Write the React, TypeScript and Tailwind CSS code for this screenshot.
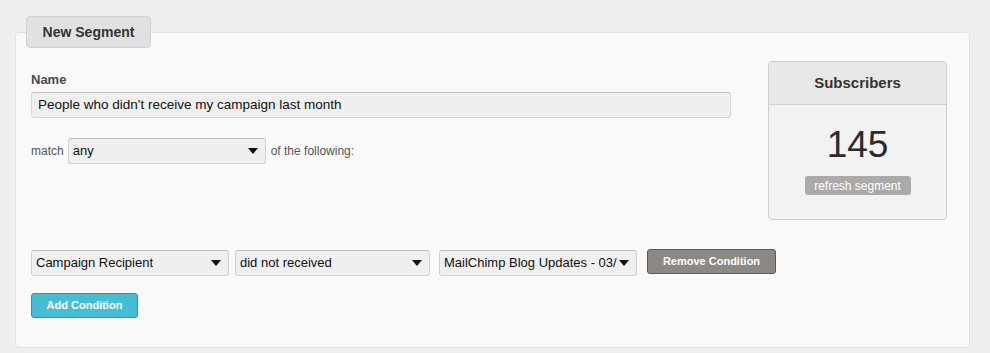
import React from 'react'

function Caret() {
  return (
    <svg width="10" height="6" viewBox="0 0 10 6" className="shrink-0">
      <path d="M0 0 L10 0 L5 6 Z" fill="#111" />
    </svg>
  )
}

function FakeSelect({ value, width }: { value: string; width: string }) {
  return (
    <div
      className={`${width} h-[26px] flex items-center justify-between gap-[2px] pl-[4px] pr-[7px] bg-[#efefef] border border-[#d2d2d2] border-t-[#bdbdbd] rounded-[3px] text-[13px] text-[#111] whitespace-nowrap`}
    >
      <span className="overflow-hidden">{value}</span>
      <Caret />
    </div>
  )
}

export default function App() {
  return (
    <div
      className="min-h-[353px] w-[990px] bg-[#efefef] pt-[16px] pl-[15px]"
      style={{ fontFamily: '"Liberation Sans", Arial, sans-serif' }}
    >
      <div className="relative z-10 ml-[11px] mb-[-16px] w-[125px] h-[32px] flex items-center justify-center bg-[#e1e1e1] border border-[#cfcfcf] rounded-[4px] text-[14px] font-bold text-[#333]">
        New Segment
      </div>

      <div className="w-[955px] h-[316px] bg-[#f9f9f9] border border-[#e2e2e2] rounded-[4px] pt-[28px] pl-[15px] pr-[22px]">
        <div className="flex justify-between">
          <div className="w-[700px] pt-[11px]">
            <div className="text-[13px] leading-[15px] font-bold text-[#4a4a4a]">Name</div>
            <div className="mt-[5px] h-[26px] flex items-center px-[6px] bg-[#efefef] border border-[#d6d6d6] border-t-[#c2c2c2] rounded-[3px] text-[13.5px] text-[#111]">
              People who didn't receive my campaign last month
            </div>
            <div className="mt-[20px] flex items-center gap-[4px] text-[12px] text-[#555]">
              <span>match</span>
              <FakeSelect value="any" width="w-[198px]" />
              <span className="ml-[1px]">of the following:</span>
            </div>
          </div>

          <div className="w-[179px] h-[159px] flex flex-col bg-[#f2f2f2] border border-[#cfcfcf] rounded-[4px] overflow-hidden">
            <div className="h-[43px] shrink-0 flex items-center justify-center bg-[#e7e7e7] border-b border-[#cfcfcf] text-[15px] font-bold text-[#333]">
              Subscribers
            </div>
            <div className="flex flex-col items-center pt-[20px]">
              <div className="text-[37px] leading-[40px] text-[#2b2b2b]">145</div>
              <div className="mt-[11px] w-[106px] h-[19px] flex items-center justify-center bg-[#aaaaaa] rounded-[3px] text-[12px] text-white">
                refresh segment
              </div>
            </div>
          </div>
        </div>

        <div className="mt-[29px] flex items-center">
          <FakeSelect value="Campaign Recipient" width="w-[198px]" />
          <div className="ml-[6px]">
            <FakeSelect value="did not received" width="w-[195px]" />
          </div>
          <div className="ml-[9px]">
            <FakeSelect value="MailChimp Blog Updates - 03/" width="w-[198px]" />
          </div>
          <div className="ml-[10px] mb-[3px] w-[129px] h-[25px] flex items-center justify-center bg-[#8c8884] border border-[#5e5a57] rounded-[3px] text-[11px] font-bold text-white">
            Remove Condition
          </div>
        </div>

        <div className="mt-[16px] w-[107px] h-[25px] flex items-center justify-center bg-[#47bdd4] border border-[#2b95ab] rounded-[3px] text-[11px] font-bold text-white">
          Add Condition
        </div>
      </div>
    </div>
  )
}
